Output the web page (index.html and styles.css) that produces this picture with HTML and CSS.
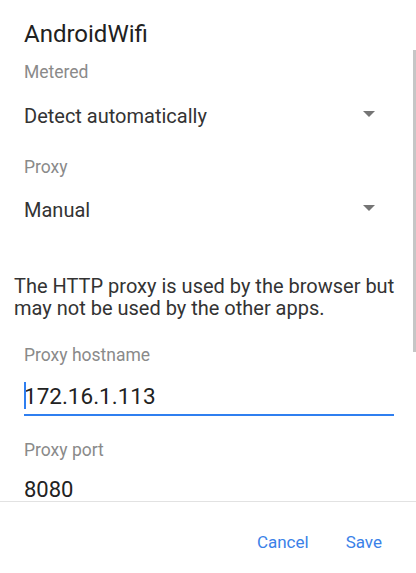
FILE: index.html
```html
<!DOCTYPE html>
<html>
<head>
<meta charset="utf-8">
<link rel="stylesheet" href="styles.css">
</head>
<body>
<div class="dialog">
  <div class="scroll">
    <div class="title">AndroidWifi</div>
    <div class="label l-metered">Metered</div>
    <div class="select s-detect"><span>Detect automatically</span><i class="caret"></i></div>
    <div class="label l-proxy">Proxy</div>
    <div class="select s-manual"><span>Manual</span><i class="caret"></i></div>
    <p class="note">The HTTP proxy is used by the browser but may not be used by the other apps.</p>
    <div class="label l-host">Proxy hostname</div>
    <div class="input"><span class="cursor"></span>172.16.1.113</div>
    <div class="label l-port">Proxy port</div>
    <div class="value">8080</div>
    <div class="scrollbar"></div>
  </div>
  <div class="footer">
    <span class="btn">Cancel</span>
    <span class="btn">Save</span>
  </div>
</div>
</body>
</html>
```
FILE: styles.css
```css
html, body {
  margin: 0;
  padding: 0;
  background: #ffffff;
}
.dialog {
  width: 416px;
  height: 573px;
  font-family: Roboto, "Noto Sans", sans-serif;
  color: #212121;
}
.scroll {
  position: relative;
  height: 501px;
  overflow: hidden;
  border-bottom: 1px solid #e2e2e2;
}
.title {
  padding: 19px 24px 0;
  font-size: 24px;
  line-height: 30px;
  color: #212121;
}
.label {
  padding-left: 24px;
  font-size: 17.5px;
  line-height: 22px;
  color: #8a8a8a;
}
.l-metered { margin-top: 12px; }
.l-proxy { margin-top: 27px; }
.l-host { margin-top: 25px; }
.l-port { margin-top: 23px; }
.select {
  display: flex;
  align-items: center;
  justify-content: space-between;
  padding: 0 41px 0 24px;
  font-size: 20px;
  line-height: 26px;
  color: #333333;
}
.s-detect { margin-top: 20px; }
.s-manual { margin-top: 19px; }
.caret {
  width: 0;
  height: 0;
  border-left: 6px solid transparent;
  border-right: 6px solid transparent;
  border-top: 6px solid #757575;
  margin-top: -4px;
}
.note {
  margin: 52px 0 0;
  padding: 0 16px 0 14px;
  font-size: 20px;
  line-height: 22px;
  color: #333333;
}
.input {
  position: relative;
  margin: 16px 22px 0 24px;
  padding-bottom: 4px;
  border-bottom: 2px solid #2f7ff0;
  font-size: 22.5px;
  line-height: 28px;
  color: #222222;
}
.cursor {
  position: absolute;
  left: 0;
  top: 0;
  width: 2px;
  height: 27px;
  background: #2f7ff0;
}
.value {
  margin-top: 15px;
  padding-left: 24px;
  font-size: 22px;
  line-height: 28px;
  color: #222222;
}
.scrollbar {
  position: absolute;
  right: 0;
  top: 50px;
  width: 3px;
  height: 302px;
  background: #c6c6c6;
}
.footer {
  display: flex;
  justify-content: flex-end;
  gap: 37px;
  padding: 30px 34px 0 0;
}
.btn {
  font-size: 17px;
  line-height: 20px;
  color: #3a81e8;
}
```
